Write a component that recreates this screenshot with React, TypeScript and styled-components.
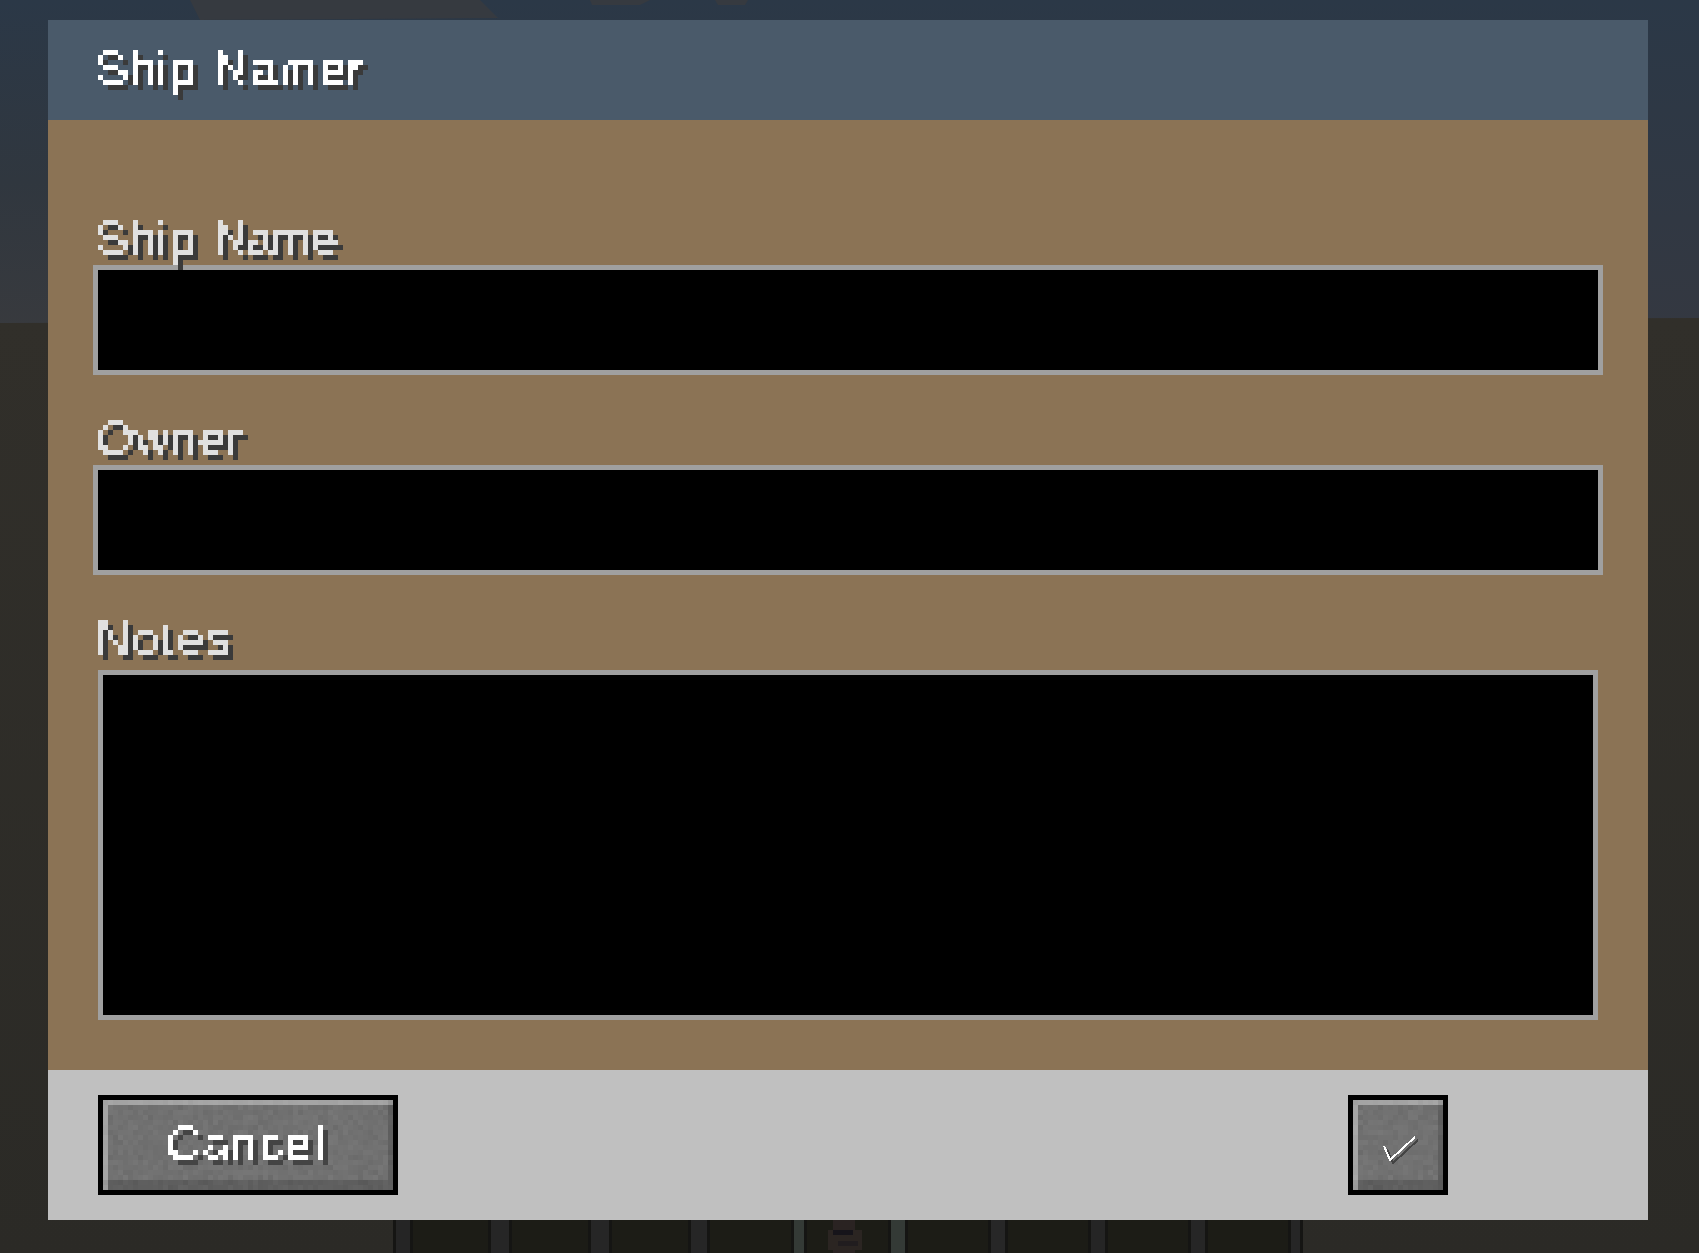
import React, { useMemo } from "react";
import styled, { createGlobalStyle } from "styled-components";

const GlobalStyle = createGlobalStyle`
  html, body { margin: 0; padding: 0; background: #2c2b27; }
  body { font-family: "Liberation Sans", Arial, sans-serif; }
`;

const Page = styled.div`
  position: relative;
  width: 1699px;
  height: 1253px;
  overflow: hidden;
  box-sizing: border-box;
  padding: 20px 51px 33px 48px;
`;

const Backdrop = styled.svg`
  position: absolute;
  inset: 0;
  width: 1699px;
  height: 1253px;
`;

const Dialog = styled.div`
  position: relative;
  display: flex;
  flex-direction: column;
  width: 1600px;
  height: 1200px;
`;

const Header = styled.header`
  height: 100px;
  box-sizing: border-box;
  padding: 25px 0 0 50px;
  background: #4a5a6a;
`;

const Body = styled.main`
  height: 950px;
  box-sizing: border-box;
  padding: 95px 0 0 45px;
  background: #8b7355;
`;

const Footer = styled.footer`
  display: flex;
  gap: 950px;
  height: 150px;
  box-sizing: border-box;
  padding: 25px 50px;
  background: #c0c0c0;
`;

const PixelText = styled.div<{ $filter: string; $spacing?: number }>`
  height: 50px;
  font-size: 48px;
  line-height: 47px;
  letter-spacing: ${(p) => p.$spacing ?? 1.3}px;
  word-spacing: 2px;
  text-indent: -2px;
  white-space: nowrap;
  color: #fff;
  filter: url(#${(p) => p.$filter});
`;

const Tight = styled.span`
  letter-spacing: -1.5px;
`;

const Field = styled.div`
  margin-bottom: 40px;
`;

const Label = styled.label`
  display: block;
  padding-left: 5px;
`;

const TextBox = styled.div`
  width: 1510px;
  height: 110px;
  box-sizing: border-box;
  border: 5px solid #a0a0a0;
  background: #000;
`;

const NotesBox = styled.div`
  width: 1500px;
  height: 350px;
  margin: 5px 0 0 5px;
  box-sizing: border-box;
  border: 5px solid #a0a0a0;
  background: #000;
`;

const Button = styled.button<{ $width: number }>`
  position: relative;
  display: block;
  width: ${(p) => p.$width}px;
  height: 100px;
  box-sizing: border-box;
  margin: 0;
  padding: 0 0 0 65px;
  border: 5px solid #000;
  background: #6f6f6f;
  text-align: left;
  overflow: hidden;
  font: inherit;
  &::after {
    content: "";
    position: absolute;
    inset: 0;
    box-shadow:
      inset 5px 5px 0 rgba(255, 255, 255, 0.36),
      inset -5px -10px 0 rgba(0, 0, 0, 0.16);
  }
`;

const Grain = styled.svg`
  position: absolute;
  left: 0;
  top: 0;
`;

const ButtonLabel = styled.span`
  position: relative;
  display: block;
  z-index: 1;
`;

const CheckIcon = styled.svg`
  position: absolute;
  z-index: 1;
  left: 0;
  top: 0;
`;

function Noise({ w, h, seed }: { w: number; h: number; seed: number }) {
  const cells = useMemo(() => {
    let s = seed;
    const next = () => {
      s = (s * 16807) % 2147483647;
      return s / 2147483647;
    };
    const out: { x: number; y: number; g: number }[] = [];
    for (let y = 0; y < h; y += 5) {
      for (let x = 0; x < w; x += 5) {
        const r = next();
        const g = Math.round(106 + (next() + r) * 7);
        out.push({ x, y, g });
      }
    }
    return out;
  }, [w, h, seed]);
  return (
    <Grain width={w} height={h} viewBox={`0 0 ${w} ${h}`} shapeRendering="crispEdges">
      {cells.map((c) => (
        <rect key={`${c.x}-${c.y}`} x={c.x} y={c.y} width={5} height={5} fill={`rgb(${c.g},${c.g},${c.g})`} />
      ))}
    </Grain>
  );
}

function PixelFilter({ id, shadow, tone }: { id: string; shadow: string; tone: number }) {
  return (
    <filter
      id={id}
      filterUnits="userSpaceOnUse"
      primitiveUnits="userSpaceOnUse"
      x="0"
      y="0"
      width="600"
      height="70"
      colorInterpolationFilters="sRGB"
    >
      <feFlood x="2" y="2" width="1" height="1" floodColor="#fff" />
      <feComposite width="5" height="5" />
      <feTile result="grid" />
      <feComposite in="SourceAlpha" in2="grid" operator="in" />
      <feComponentTransfer>
        <feFuncA type="discrete" tableValues="0 1 1 1" />
      </feComponentTransfer>
      <feMorphology operator="dilate" radius="2" result="block" />
      <feFlood floodColor={`rgb(${tone},${tone},${tone})`} />
      <feComposite in2="block" operator="in" result="face" />
      <feOffset in="block" dx="5" dy="5" result="moved" />
      <feFlood floodColor={shadow} />
      <feComposite in2="moved" operator="in" result="under" />
      <feMerge>
        <feMergeNode in="under" />
        <feMergeNode in="face" />
      </feMerge>
    </filter>
  );
}

const BARS = [
  { x: 393, w: 20, c: "#252525" },
  { x: 488, w: 24, c: "#262626" },
  { x: 588, w: 24, c: "#262626" },
  { x: 688, w: 22, c: "#262626" },
  { x: 791, w: 16, c: "#343a36" },
  { x: 888, w: 20, c: "#343a36" },
  { x: 988, w: 20, c: "#272727" },
  { x: 1088, w: 20, c: "#252525" },
  { x: 1188, w: 20, c: "#262626" },
  { x: 1288, w: 15, c: "#262626" },
];

export default function App() {
  return (
    <Page>
      <GlobalStyle />
      <Backdrop viewBox="0 0 1699 1253">
        <defs>
          <linearGradient id="sky" x1="0" y1="0" x2="0" y2="1">
            <stop offset="0" stopColor="#2b3847" />
            <stop offset="0.55" stopColor="#30373f" />
            <stop offset="1" stopColor="#383a3e" />
          </linearGradient>
          <linearGradient id="skyRight" x1="0" y1="0" x2="0" y2="1">
            <stop offset="0" stopColor="#2b3847" />
            <stop offset="1" stopColor="#343841" />
          </linearGradient>
          <linearGradient id="ground" x1="0" y1="0" x2="0" y2="1">
            <stop offset="0" stopColor="#312f2a" />
            <stop offset="1" stopColor="#2b2a26" />
          </linearGradient>
        </defs>
        <rect width="1699" height="330" fill="url(#sky)" />
        <rect x="1600" width="99" height="330" fill="url(#skyRight)" />
        <path d="M190 0 L480 0 L498 18 L200 20 Z" fill="#363a40" />
        <path d="M590 0 L650 0 L640 5 L592 5 Z" fill="#363a40" />
        <path d="M715 0 L748 0 L745 5 L718 5 Z" fill="#363a40" />
        <path d="M0 323 L1699 318 L1699 1253 L0 1253 Z" fill="url(#ground)" />
        <rect x="393" y="1220" width="910" height="33" fill="#1c1c16" />
        <g shapeRendering="crispEdges">
          {BARS.map((b) => (
            <g key={b.x}>
              <rect x={b.x} y="1220" width={b.w} height="33" fill="#151513" />
              <rect x={b.x + 3} y="1220" width={Math.max(b.w - 6, 5)} height="33" fill={b.c} />
            </g>
          ))}
          <rect x="833" y="1220" width="22" height="33" fill="#2a2322" />
          <rect x="828" y="1230" width="34" height="20" fill="#2b2522" />
          <rect x="833" y="1230" width="20" height="5" fill="#16141a" />
          <rect x="838" y="1241" width="20" height="5" fill="#211d1f" />
        </g>
        <PixelFilter id="titleText" shadow="#3a3a3a" tone={255} />
        <PixelFilter id="labelText" shadow="#3a3a3a" tone={224} />
        <PixelFilter id="buttonText" shadow="#444444" tone={255} />
      </Backdrop>
      <Dialog>
        <Header>
          <PixelText $filter="titleText">Ship Namer</PixelText>
        </Header>
        <Body>
          <Field>
            <Label>
              <PixelText $filter="labelText">
                Ship <Tight>Name</Tight>
              </PixelText>
            </Label>
            <TextBox />
          </Field>
          <Field>
            <Label>
              <PixelText $filter="labelText">Owner</PixelText>
            </Label>
            <TextBox />
          </Field>
          <Label>
            <PixelText $filter="labelText" $spacing={2.1}>
              Notes
            </PixelText>
          </Label>
          <NotesBox />
        </Body>
        <Footer>
          <Button $width={300}>
            <Noise w={290} h={90} seed={1234} />
            <ButtonLabel>
              <PixelText $filter="buttonText" $spacing={1.7}>
                Cancel
              </PixelText>
            </ButtonLabel>
          </Button>
          <Button $width={100} aria-label="Confirm">
            <Noise w={90} h={90} seed={9876} />
            <CheckIcon width="90" height="90" viewBox="0 0 90 90" shapeRendering="crispEdges" fill="none">
              <path d="M31 46 L37 60 L62 37" stroke="#444" strokeWidth="2" transform="translate(3 3)" />
              <path d="M31 46 L37 60 L62 37" stroke="#fff" strokeWidth="2" />
            </CheckIcon>
          </Button>
        </Footer>
      </Dialog>
    </Page>
  );
}
